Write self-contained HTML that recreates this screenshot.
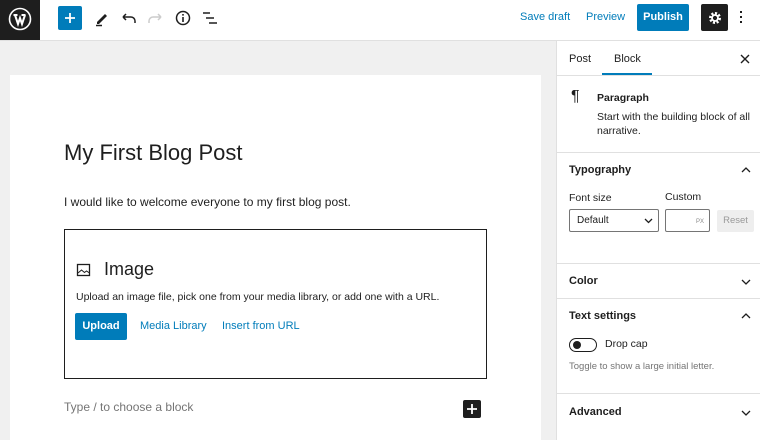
<!DOCTYPE html>
<html><head><meta charset="utf-8"><style>
*{box-sizing:border-box;margin:0;padding:0}
body{width:760px;height:440px;overflow:hidden;font-family:"Liberation Sans",Arial,sans-serif;background:#fff;position:relative;color:#1e1e1e}
.a{position:absolute}
.top{left:0;top:0;width:760px;height:41px;background:#fff;border-bottom:1px solid #e0e0e0}
.blue{color:#007cba}
.sb{left:556px;top:41px;width:204px;height:399px;border-left:1px solid #e0e0e0;background:#fff}
.sec{position:absolute;left:0;width:204px;border-top:1px solid #e0e0e0}
.h{font-size:11px;font-weight:bold;position:absolute;left:12px}
.chev{position:absolute;right:10px;width:10px;height:6px}
</style></head><body>
<div class="a top"></div>
<div class="a" style="left:0;top:0;width:40px;height:40px;background:#1e1e1e"></div>
<svg class="a" style="left:8px;top:7px" width="24" height="24" viewBox="0 0 24 24"><circle cx="12" cy="12" r="10.5" fill="none" stroke="#fff" stroke-width="1.6"/><path d="M5.5 8h4M13.5 8h4M7 8l3 9 2-6 2 6 3-9" stroke="#fff" stroke-width="2" fill="none"/></svg>
<div class="a" style="left:58px;top:6px;width:24px;height:24px;background:#007cba;border-radius:2px"></div>
<svg class="a" style="left:58px;top:6px" width="24" height="24"><path d="M12 7v10M7 12h10" stroke="#fff" stroke-width="1.8"/></svg>
<svg class="a" style="left:92px;top:8px" width="20" height="20"><path d="M5 14l8-8 2 2-8 8H5z" fill="#1e1e1e"/><path d="M4 17.5h6" stroke="#1e1e1e" stroke-width="1.5"/></svg>
<svg class="a" style="left:119px;top:8px" width="20" height="20"><path d="M4 9h8a4 4 0 0 1 4 4v2M4 9l3-3M4 9l3 3" stroke="#1e1e1e" stroke-width="1.5" fill="none"/></svg>
<svg class="a" style="left:145px;top:8px" width="20" height="20"><path d="M16 9H8a4 4 0 0 0-4 4v2M16 9l-3-3M16 9l-3 3" stroke="#ccc" stroke-width="1.5" fill="none"/></svg>
<svg class="a" style="left:172px;top:7px" width="22" height="22"><circle cx="11" cy="11" r="6.5" stroke="#1e1e1e" stroke-width="1.5" fill="none"/><path d="M11 10v5M11 7v1.6" stroke="#1e1e1e" stroke-width="1.6"/></svg>
<svg class="a" style="left:200px;top:8px" width="20" height="20"><path d="M3 5h7M6 10h8M9 15h8" stroke="#1e1e1e" stroke-width="1.5"/></svg>
<div class="a blue" style="left:520px;top:11px;font-size:11px">Save draft</div>
<div class="a blue" style="left:586px;top:11px;font-size:11px">Preview</div>
<div class="a" style="left:637px;top:4px;width:52px;height:27px;background:#007cba;border-radius:2px;color:#fff;font-size:11px;font-weight:bold;text-align:center;line-height:27px">Publish</div>
<div class="a" style="left:701px;top:4px;width:27px;height:27px;background:#1e1e1e;border-radius:2px"></div>
<svg class="a" style="left:707px;top:10px" width="16" height="16" viewBox="0 0 16 16"><circle cx="8" cy="8" r="4.5" fill="none" stroke="#fff" stroke-width="3" stroke-dasharray="2 1.5"/><circle cx="8" cy="8" r="3" fill="none" stroke="#fff" stroke-width="1.8"/></svg>
<div class="a" style="left:740px;top:11px;width:2px;height:2px;background:#1e1e1e;box-shadow:0 5px #1e1e1e,0 10px #1e1e1e"></div>
<div class="a" style="left:0;top:41px;width:556px;height:399px;background:#f0f0f0"></div>
<div class="a" style="left:10px;top:75px;width:531px;height:365px;background:#fff"></div>
<div class="a" style="left:64px;top:140px;font-size:22px">My First Blog Post</div>
<div class="a" style="left:64px;top:195px;font-size:12px">I would like to welcome everyone to my first blog post.</div>
<div class="a" style="left:64px;top:229px;width:423px;height:150px;border:1px solid #1e1e1e"></div>
<svg class="a" style="left:76px;top:262px" width="16" height="16"><rect x="1.5" y="2.5" width="12" height="11" fill="none" stroke="#1e1e1e" stroke-width="1.3"/><path d="M2 11l3.5-3 3 2.5 2-1.5 3 2" stroke="#1e1e1e" fill="none"/></svg>
<div class="a" style="left:104px;top:259px;font-size:18px">Image</div>
<div class="a" style="left:76px;top:291px;font-size:10.5px">Upload an image file, pick one from your media library, or add one with a URL.</div>
<div class="a" style="left:75px;top:313px;width:52px;height:27px;background:#007cba;border-radius:2px;color:#fff;font-size:11px;font-weight:bold;text-align:center;line-height:27px">Upload</div>
<div class="a blue" style="left:140px;top:320px;font-size:11px">Media Library</div>
<div class="a blue" style="left:222px;top:320px;font-size:11px">Insert from URL</div>
<div class="a" style="left:64px;top:400px;font-size:12px;color:#757575">Type / to choose a block</div>
<div class="a" style="left:463px;top:400px;width:18px;height:18px;background:#1e1e1e;border-radius:2px"></div>
<svg class="a" style="left:463px;top:400px" width="18" height="18"><path d="M9 4v10M4 9h10" stroke="#fff" stroke-width="1.8"/></svg>
<div class="a sb">
<div class="a" style="left:12px;top:12px;font-size:11px">Post</div>
<div class="a" style="left:57px;top:12px;font-size:11px">Block</div>
<div class="a" style="left:45px;top:32px;width:50px;height:2px;background:#007cba"></div>
<svg class="a" style="left:183px;top:13px" width="10" height="10"><path d="M1 1l8 8M9 1l-8 8" stroke="#1e1e1e" stroke-width="1.4"/></svg>
<div class="sec" style="top:34px;height:77px">
<div class="a" style="left:14px;top:12px;font-size:16px">¶</div>
<div class="a" style="left:40px;top:16px;font-size:10.5px;font-weight:bold">Paragraph</div>
<div class="a" style="left:40px;top:34px;font-size:10.5px;line-height:14px;width:164px">Start with the building block of all narrative.</div>
</div>
<div class="sec" style="top:111px;height:111px">
<div class="h" style="top:11px">Typography</div>
<svg class="chev" style="top:14px" viewBox="0 0 10 6"><path d="M1 5l4-4 4 4" stroke="#1e1e1e" stroke-width="1.3" fill="none"/></svg>
<div class="a" style="left:12px;top:39px;font-size:10.5px">Font size</div>
<div class="a" style="left:108px;top:38px;font-size:10.5px">Custom</div>
<div class="a" style="left:12px;top:56px;width:90px;height:23px;border:1px solid #757575;border-radius:2px;font-size:10px;padding:5px 0 0 7px">Default</div>
<svg class="a" style="left:87px;top:65px" width="9" height="6"><path d="M1 1l3.5 3.5L8 1" stroke="#1e1e1e" stroke-width="1.3" fill="none"/></svg>
<div class="a" style="left:108px;top:56px;width:45px;height:23px;border:1px solid #757575;border-radius:2px;font-size:6px;color:#888;text-align:right;padding:9px 5px 0 0">PX</div>
<div class="a" style="left:160px;top:57px;width:37px;height:22px;background:#eee;color:#999;font-size:9.5px;text-align:center;line-height:22px;border-radius:2px">Reset</div>
</div>
<div class="sec" style="top:222px;height:35px">
<div class="h" style="top:11px">Color</div>
<svg class="chev" style="top:15px" viewBox="0 0 10 6"><path d="M1 1l4 4 4-4" stroke="#1e1e1e" stroke-width="1.3" fill="none"/></svg>
</div>
<div class="sec" style="top:257px;height:95px">
<div class="h" style="top:11px">Text settings</div>
<svg class="chev" style="top:14px" viewBox="0 0 10 6"><path d="M1 5l4-4 4 4" stroke="#1e1e1e" stroke-width="1.3" fill="none"/></svg>
<div class="a" style="left:12px;top:39px;width:28px;height:14px;border:1px solid #1e1e1e;border-radius:7px"></div>
<div class="a" style="left:16px;top:42px;width:8px;height:8px;border-radius:50%;background:#1e1e1e"></div>
<div class="a" style="left:48px;top:39px;font-size:10.5px">Drop cap</div>
<div class="a" style="left:12px;top:62px;font-size:9.5px;color:#757575">Toggle to show a large initial letter.</div>
</div>
<div class="sec" style="top:352px;height:47px">
<div class="h" style="top:12px">Advanced</div>
<svg class="chev" style="top:16px" viewBox="0 0 10 6"><path d="M1 1l4 4 4-4" stroke="#1e1e1e" stroke-width="1.3" fill="none"/></svg>
</div>
</div>
</body></html>
